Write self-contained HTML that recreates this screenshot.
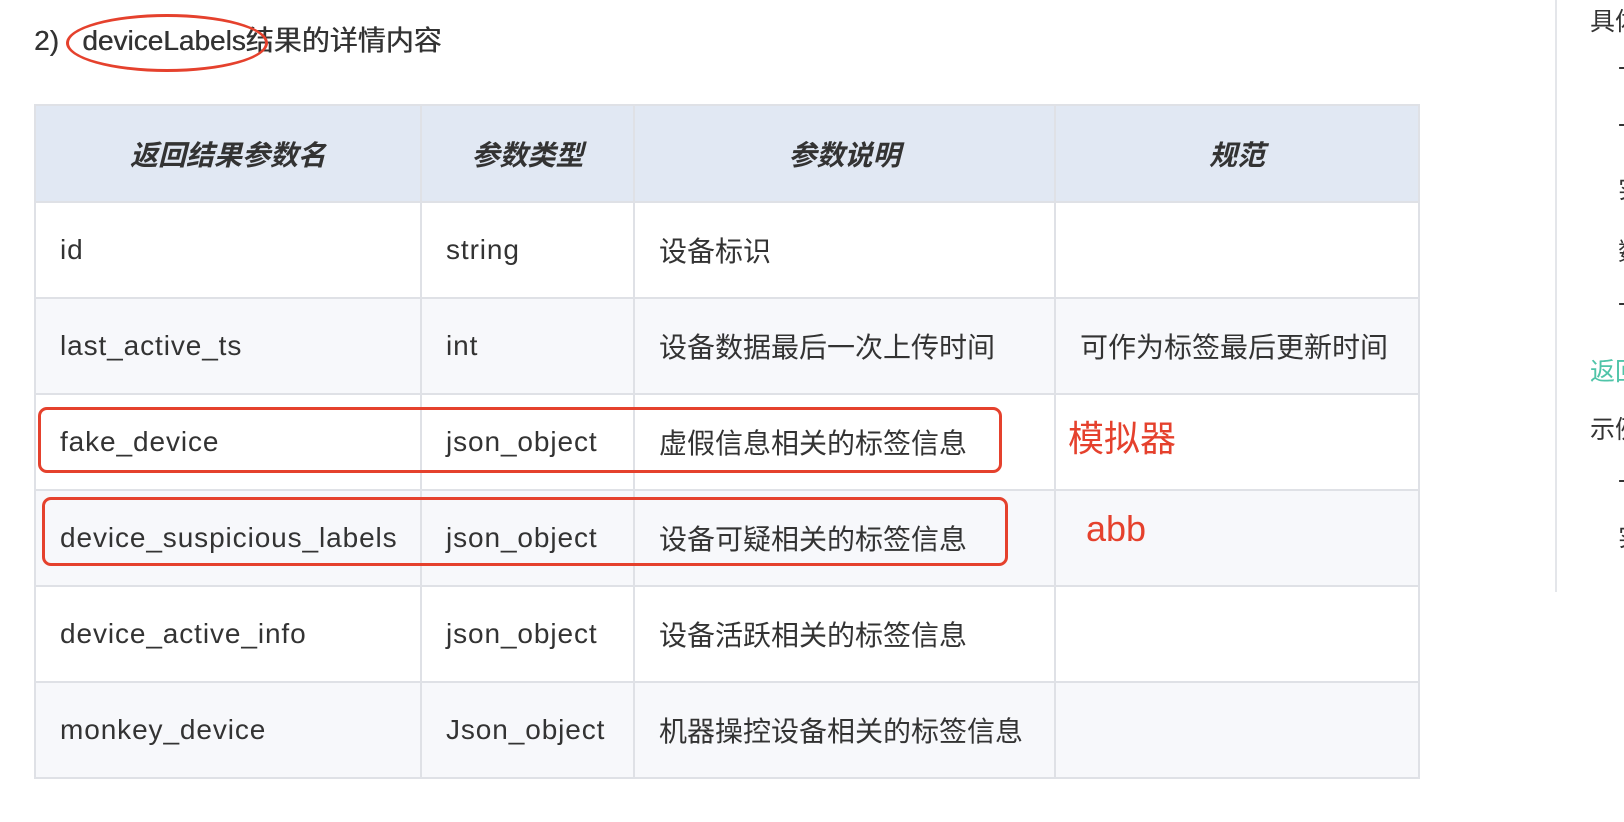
<!DOCTYPE html><html><head><meta charset="utf-8"><style>
body{margin:0;width:1624px;height:822px;background:#fff;position:relative;overflow:hidden;font-family:"Liberation Sans","Noto Sans CJK SC",sans-serif;color:#333}
.t{position:absolute;left:34px;top:16px;font-size:28px;line-height:50px;color:#333;white-space:nowrap;text-shadow:0.4px 0 0 #333}
table{position:absolute;left:34px;top:104px;border-collapse:collapse;font-size:28px}
td,th{border:2px solid #dfe1e6;padding:0 0 0 24px;text-align:left;height:96px;box-sizing:border-box;white-space:nowrap}
td.l{letter-spacing:0.9px}
th{background:#e1e8f3;font-style:italic;font-weight:bold;text-align:center;padding:0;height:97px}
tr:nth-child(odd) td{background:#f7f8fb}
.a{position:absolute;border:3px solid #e5412d}
.r{position:absolute;color:#e5412d;font-size:36px;white-space:nowrap}
.s{position:absolute;font-size:25px;color:#333;white-space:nowrap}
</style></head><body>
<div class="t">2)&nbsp;&nbsp; deviceLabels结果的详情内容</div>
<div class="a" style="left:66px;top:14px;width:196px;height:52px;border-radius:50%"></div>
<table>
<tr><th style="width:386px">返回结果参数名</th><th style="width:213px">参数类型</th><th style="width:421px">参数说明</th><th style="width:364px">规范</th></tr>
<tr><td class="l">id</td><td class="l">string</td><td>设备标识</td><td></td></tr>
<tr><td class="l">last_active_ts</td><td class="l">int</td><td>设备数据最后一次上传时间</td><td>可作为标签最后更新时间</td></tr>
<tr><td class="l">fake_device</td><td class="l">json_object</td><td>虚假信息相关的标签信息</td><td></td></tr>
<tr><td class="l">device_suspicious_labels</td><td class="l">json_object</td><td>设备可疑相关的标签信息</td><td></td></tr>
<tr><td class="l">device_active_info</td><td class="l">json_object</td><td>设备活跃相关的标签信息</td><td></td></tr>
<tr><td class="l">monkey_device</td><td class="l">Json_object</td><td>机器操控设备相关的标签信息</td><td></td></tr>
</table>
<div class="a" style="left:38px;top:407px;width:958px;height:60px;border-radius:9px"></div>
<div class="a" style="left:42px;top:497px;width:960px;height:63px;border-radius:9px"></div>
<div class="r" style="left:1068px;top:410px">模拟器</div>
<div class="r" style="left:1086px;top:508px">abb</div>
<div style="position:absolute;left:1555px;top:0;width:2px;height:592px;background:#e4e6ea"></div>
<div class="s" style="left:1590px;top:2px">具体</div>
<div class="s" style="left:1618px;top:50px">一</div>
<div class="s" style="left:1618px;top:107px">一</div>
<div class="s" style="left:1618px;top:170px">实</div>
<div class="s" style="left:1618px;top:232px">数</div>
<div class="s" style="left:1618px;top:286px">一</div>
<div class="s" style="left:1590px;top:352px;color:#4fc4a8">返回</div>
<div class="s" style="left:1590px;top:410px">示例</div>
<div class="s" style="left:1618px;top:463px">一</div>
<div class="s" style="left:1618px;top:518px">实</div>
</body></html>
